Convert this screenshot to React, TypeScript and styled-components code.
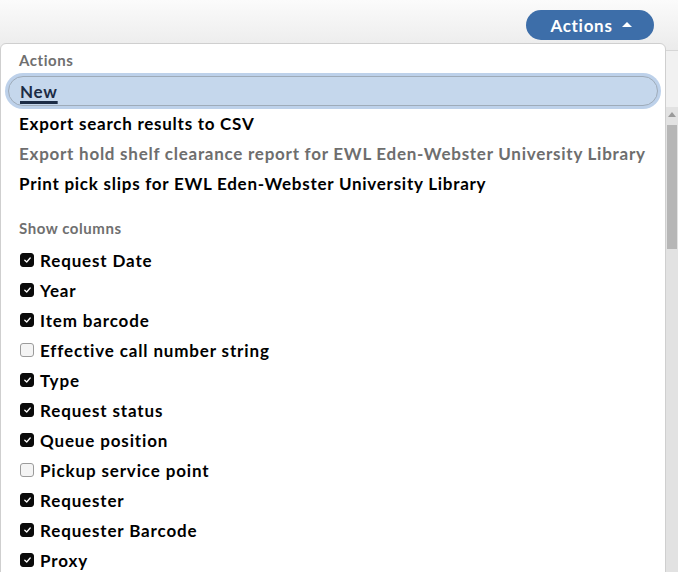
import React from "react";
import styled, { createGlobalStyle } from "styled-components";

const Global = createGlobalStyle`
  html, body { margin: 0; padding: 0; }
  body {
    width: 678px; height: 572px; overflow: hidden;
    font-family: Lato, "Noto Sans", "Liberation Sans", sans-serif;
    background: #f1f1f1;
  }
`;

const Page = styled.div`
  position: relative;
  width: 678px;
  height: 572px;
  display: flex;
  flex-direction: column;
  overflow: hidden;
`;

const Header = styled.div`
  height: 51px;
  flex: none;
  display: flex;
  align-items: flex-start;
  justify-content: flex-end;
  padding: 10px 24px 0 0;
  box-sizing: border-box;
  background: linear-gradient(#fbfbfb, #ebebeb);
  border-bottom: 1px solid #d6d6d6;
`;

const ActionsButton = styled.button`
  height: 30px;
  width: 128px;
  border: none;
  border-radius: 15px;
  background: #3d6ea9;
  color: #fff;
  font-family: inherit;
  font-weight: 700;
  font-size: 17px;
  letter-spacing: 0.7px;
  display: flex;
  align-items: center;
  justify-content: center;
  gap: 9px;
  padding: 0 0 0 2px;
`;

const Caret = styled.span`
  width: 0;
  height: 0;
  border-left: 5px solid transparent;
  border-right: 5px solid transparent;
  border-bottom: 5px solid #fff;
  margin-bottom: 2px;
`;

const Body = styled.div`
  flex: 1;
  display: flex;
  flex-direction: column;
`;

const SubBar = styled.div`
  height: 56px;
  flex: none;
  background: #f1f1f1;
`;

const Pane = styled.div`
  flex: 1;
  display: flex;
  justify-content: flex-end;
`;

const ScrollTrack = styled.div`
  width: 12px;
  background: #e2e2e2;
  border-left: 1px solid #d4d4d4;
  display: flex;
  flex-direction: column;
  align-items: center;
`;

const ScrollArrow = styled.div`
  margin-top: 5px;
  width: 0;
  height: 0;
  border-left: 4px solid transparent;
  border-right: 4px solid transparent;
  border-bottom: 5px solid #9a9a9a;
`;

const ScrollThumb = styled.div`
  margin-top: 8px;
  width: 10px;
  height: 124px;
  background: #b6b6b6;
`;

const Menu = styled.div`
  position: absolute;
  left: 0;
  top: 43px;
  width: 666px;
  height: 560px;
  box-sizing: border-box;
  background: #fff;
  border: 1px solid #cfcfcf;
  border-radius: 6px;
  padding: 6px 4px 0 4px;
  display: flex;
  flex-direction: column;
`;

const SectionTitle = styled.div<{ $top?: number }>`
  font-size: 15px;
  font-weight: 700;
  color: #6f6f6f;
  letter-spacing: 0.55px;
  line-height: 20px;
  padding: 0 14px;
  margin-top: ${(p) => p.$top ?? 0}px;
  margin-bottom: ${(p) => (p.$top ? 7 : 5)}px;
`;

const Item = styled.div<{ $active?: boolean; $disabled?: boolean }>`
  height: 30px;
  flex: none;
  display: flex;
  align-items: center;
  padding: 0 14px;
  font-size: 17px;
  font-weight: 700;
  letter-spacing: 0.74px;
  color: ${(p) => (p.$disabled ? "#6e6e6e" : "#000")};
  border-radius: 16px;
  box-sizing: border-box;
  white-space: nowrap;
  ${(p) =>
    p.$active &&
    `
    background: #c5d7ec;
    border: 1px solid #9eabb9;
    box-shadow: 0 0 0 3px #bdd1ea;
    padding: 0 11px;
    margin: 1px 3px 2px 3px;
    color: #1c2c46;
  `}
`;

const Underlined = styled.span`
  text-decoration: underline;
  text-decoration-thickness: 3px;
  text-underline-offset: 3px;
`;

const CheckRow = styled.label`
  height: 30px;
  flex: none;
  display: flex;
  align-items: center;
  gap: 6px;
  padding: 0 14px 0 15px;
  font-size: 17px;
  font-weight: 700;
  letter-spacing: 0.85px;
  color: #000;
`;

const Box = styled.span<{ $checked: boolean }>`
  width: 14px;
  height: 14px;
  box-sizing: border-box;
  border-radius: 3px;
  flex: none;
  display: flex;
  align-items: center;
  justify-content: center;
  background: ${(p) => (p.$checked ? "#0b0b0b" : "#f4f4f4")};
  border: 1px solid ${(p) => (p.$checked ? "#0b0b0b" : "#9b9b9b")};
`;

const actions = [
  { label: "New", active: true },
  { label: "Export search results to CSV" },
  { label: "Export hold shelf clearance report for EWL Eden-Webster University Library", disabled: true },
  { label: "Print pick slips for EWL Eden-Webster University Library" },
];

const columns: [string, boolean][] = [
  ["Request Date", true],
  ["Year", true],
  ["Item barcode", true],
  ["Effective call number string", false],
  ["Type", true],
  ["Request status", true],
  ["Queue position", true],
  ["Pickup service point", false],
  ["Requester", true],
  ["Requester Barcode", true],
  ["Proxy", true],
];

export default function App() {
  return (
    <Page>
      <Global />
      <Header>
        <ActionsButton>
          Actions
          <Caret />
        </ActionsButton>
      </Header>
      <Body>
        <SubBar />
        <Pane>
          <ScrollTrack>
            <ScrollArrow />
            <ScrollThumb />
          </ScrollTrack>
        </Pane>
      </Body>
      <Menu>
        <SectionTitle>Actions</SectionTitle>
        {actions.map((a) => (
          <Item key={a.label} $active={a.active} $disabled={a.disabled}>
            {a.active ? <Underlined>{a.label}</Underlined> : a.label}
          </Item>
        ))}
        <SectionTitle $top={20}>Show columns</SectionTitle>
        {columns.map(([label, checked]) => (
          <CheckRow key={label}>
            <Box $checked={checked}>
              {checked && (
                <svg width="7" height="6" viewBox="0 0 7 6">
                  <path d="M0.8 3.2 L2.7 5 L6.2 1" fill="none" stroke="#fff" strokeWidth="1.3" strokeLinecap="round" strokeLinejoin="round" />
                </svg>
              )}
            </Box>
            {label}
          </CheckRow>
        ))}
      </Menu>
    </Page>
  );
}
